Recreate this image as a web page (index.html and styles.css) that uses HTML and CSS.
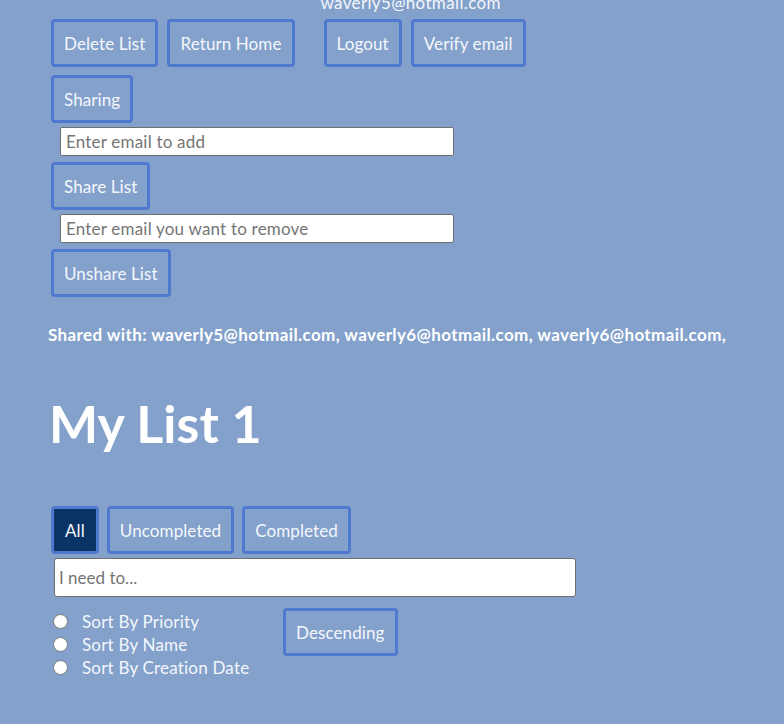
FILE: index.html
```html
<!DOCTYPE html>
<html>
<head>
<meta charset="utf-8">
<link rel="stylesheet" href="styles.css">
</head>
<body>
<div class="page">
  <div class="top">
    <div class="group">
      <button class="btn">Delete List</button>
      <button class="btn">Return Home</button>
    </div>
    <div class="account">
      <div class="email">waverly5@hotmail.com</div>
      <div class="group">
        <button class="btn">Logout</button>
        <button class="btn">Verify email</button>
      </div>
    </div>
  </div>
  <div class="sharing">
    <button class="btn">Sharing</button>
    <input class="field" type="text" placeholder="Enter email to add">
    <button class="btn">Share List</button>
    <input class="field" type="text" placeholder="Enter email you want to remove">
    <button class="btn">Unshare List</button>
  </div>
  <p class="shared">Shared with: waverly5@hotmail.com, waverly6@hotmail.com, waverly6@hotmail.com,</p>
  <h1 class="title">My List 1</h1>
  <div class="filters">
    <button class="btn active">All</button>
    <button class="btn">Uncompleted</button>
    <button class="btn">Completed</button>
  </div>
  <input class="todo" type="text" placeholder="I need to...">
  <div class="sort">
    <div class="options">
      <label class="opt"><input type="radio" name="sort" class="radio"><span>Sort By Priority</span></label>
      <label class="opt"><input type="radio" name="sort" class="radio"><span>Sort By Name</span></label>
      <label class="opt"><input type="radio" name="sort" class="radio"><span>Sort By Creation Date</span></label>
    </div>
    <button class="btn">Descending</button>
  </div>
</div>
</body>
</html>
```
FILE: styles.css
```css
html, body {
  margin: 0;
  padding: 0;
  background: #83a1cb;
  height: 100%;
  overflow: hidden;
}
.page {
  padding-left: 51px;
  font-family: Lato, "Open Sans", sans-serif;
  color: #f4f7fc;
  display: flex;
  flex-direction: column;
  align-items: flex-start;
}
.top {
  display: flex;
  align-items: flex-end;
  margin-top: 19px;
}
.group {
  display: flex;
  gap: 9px;
}
.top > .group {
  margin-right: 29px;
}
.account {
  display: flex;
  flex-direction: column;
  margin-top: -40px;
}
.email {
  font-size: 17px;
  letter-spacing: 0.35px;
  line-height: 20px;
  margin-left: -3px;
  height: 21px;
  position: relative;
  top: -5px;
}
.btn {
  font-family: Lato, "Open Sans", sans-serif;
  font-size: 17px;
  letter-spacing: 0.1px;
  font-weight: 400;
  color: #f4f7fc;
  background: transparent;
  border: 3px solid #4f78cf;
  border-radius: 4px;
  height: 48px;
  padding: 0 10px;
  margin: 0;
  cursor: pointer;
}
.btn.active {
  background: #0a3466;
  padding: 0 11px;
}
.sharing {
  display: flex;
  flex-direction: column;
  align-items: flex-start;
  margin-top: 8px;
}
.field {
  width: 394px;
  height: 29px;
  box-sizing: border-box;
  margin: 4px 0 6px 9px;
  border: 1px solid #6f6f6f;
  border-radius: 2px;
  padding: 0 5px;
  font-family: Lato, "Open Sans", sans-serif;
  font-size: 17px;
  letter-spacing: 0.2px;
  background: #fff;
  color: #333;
}
.field::placeholder, .todo::placeholder {
  color: #757575;
}
.shared {
  margin: 28px 0 0 -3px;
  font-size: 17px;
  letter-spacing: 0.4px;
  font-weight: 700;
  line-height: 20px;
  color: #fff;
  white-space: nowrap;
}
.title {
  margin: 48px 0 0 -2px;
  font-size: 52px;
  font-weight: 700;
  line-height: 60px;
  color: #fff;
}
.filters {
  display: flex;
  gap: 8px;
  margin-top: 53px;
}
.todo {
  width: 522px;
  height: 39px;
  box-sizing: border-box;
  margin: 4px 0 0 3px;
  border: 1px solid #6f6f6f;
  border-radius: 3px;
  padding: 0 4px;
  font-family: Lato, "Open Sans", sans-serif;
  font-size: 17px;
  background: #fff;
}
.sort {
  display: flex;
  align-items: flex-start;
  margin-top: 13px;
}
.options {
  display: flex;
  flex-direction: column;
  width: 232px;
}
.opt {
  display: flex;
  align-items: center;
  height: 23px;
  font-size: 17px;
  letter-spacing: 0.2px;
  color: #f4f7fc;
}
.radio {
  appearance: none;
  -webkit-appearance: none;
  width: 15px;
  height: 15px;
  margin: 0 14px 0 2px;
  border: 1px solid #7a7a7a;
  border-radius: 50%;
  background: #fff;
  box-sizing: border-box;
}
.sort .btn {
  margin-top: -2px;
}
```
